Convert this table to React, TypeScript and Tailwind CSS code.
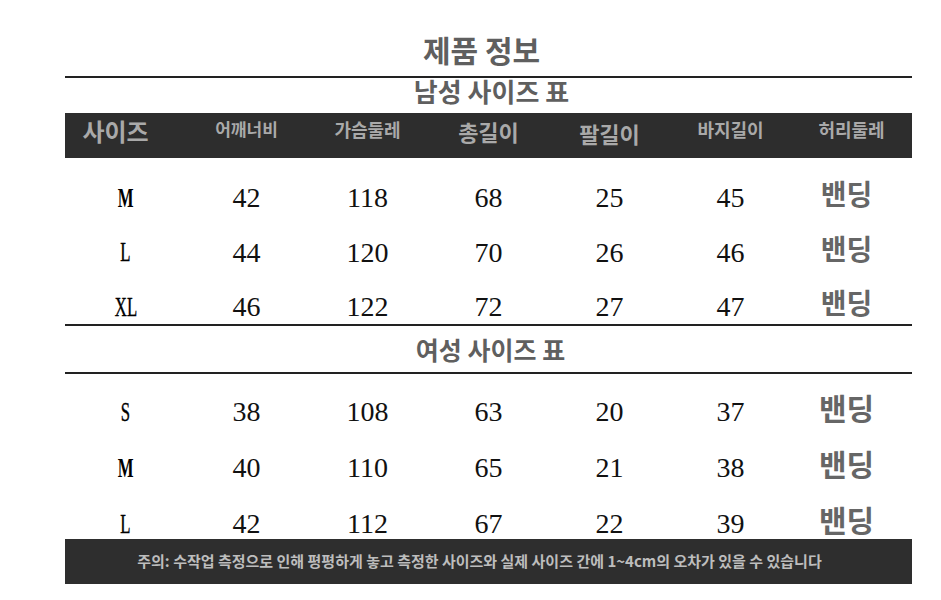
const KR = "font-['Noto_Sans_CJK_KR',sans-serif]";
const SERIF = "font-['Liberation_Serif',serif]";

const men = [
  ["M", "42", "118", "68", "25", "45"],
  ["L", "44", "120", "70", "26", "46"],
  ["XL", "46", "122", "72", "27", "47"],
];

const women = [
  ["S", "38", "108", "63", "20", "37"],
  ["M", "40", "110", "65", "21", "38"],
  ["L", "42", "112", "67", "22", "39"],
];

function SizeLabel({ v }: { v: string }) {
  const bold = v === "M";
  return (
    <span
      className={`inline-block scale-x-[0.62] text-[27px] text-black ${SERIF} ${bold ? "font-bold" : "[-webkit-text-stroke:0.4px_black]"}`}
    >
      {v}
    </span>
  );
}

function Rows({ data, rowH, pt, big }: { data: string[][]; rowH: string; pt: string; big?: boolean }) {
  return (
    <div className={`${pt}`}>
      {data.map((r, i) => (
        <div key={i} className={`grid grid-cols-7 items-center ${rowH}`}>
          <div className="text-center leading-none">
            <SizeLabel v={r[0]} />
          </div>
          {r.slice(1).map((n, j) => (
            <div key={j} className={`text-center text-[28px] leading-none text-[#111] ${SERIF}`}>
              {n}
            </div>
          ))}
          <div
            className={`-translate-x-[5px] -translate-y-[5px] text-center font-bold leading-none text-[#666] ${KR} ${
              big ? "text-[30px]" : "text-[28px]"
            }`}
          >
            밴딩
          </div>
        </div>
      ))}
    </div>
  );
}

export default function App() {
  return (
    <div className="h-[600px] w-[941px] bg-white">
      <div className="ml-[65px] w-[847px]">
        {/* title */}
        <div className={`flex h-[76px] items-end justify-center pb-[12px] pr-[14px] text-[30px] font-bold leading-none text-[#5f5f5f] ${KR}`}>
          제품 정보
        </div>
        <div className="h-[2px] bg-[#222]" />

        {/* men */}
        <div className={`flex h-[35px] items-start justify-center pl-[6px] text-[26px] font-bold leading-none text-[#5f5f5f] ${KR}`}>
          남성 사이즈 표
        </div>
        <div className={`grid h-[45px] grid-cols-7 bg-[#2d2d2d] font-bold text-[#a9a9a9] ${KR}`}>
          <div className="-translate-x-[10px] pt-[6px] text-center text-[24px] leading-none">사이즈</div>
          <div className="pt-[7px] text-center text-[17px] leading-none">어깨너비</div>
          <div className="pt-[7px] text-center text-[18px] leading-none">가슴둘레</div>
          <div className="pt-[7px] text-center text-[22px] leading-none">총길이</div>
          <div className="pt-[9px] text-center text-[22px] leading-none">팔길이</div>
          <div className="pt-[7px] text-center text-[18px] leading-none">바지길이</div>
          <div className="pt-[7px] text-center text-[18px] leading-none">허리둘레</div>
        </div>
        <div className="h-[166px]">
          <Rows data={men} rowH="h-[54.5px]" pt="pt-[13px]" />
        </div>
        <div className="h-[2px] bg-[#222]" />

        {/* women */}
        <div className={`flex h-[46px] items-center justify-center pl-[4px] text-[25px] font-bold leading-none text-[#5f5f5f] ${KR}`}>
          여성 사이즈 표
        </div>
        <div className="h-[2px] bg-[#222]" />
        <div className="h-[165px]">
          <Rows data={women} rowH="h-[56px]" pt="pt-[10px]" big />
        </div>

        {/* footer note */}
        <div className={`flex h-[45px] items-center justify-center bg-[#2e2e2e] pr-[18px] text-[15px] font-bold text-[#bdbdbd] ${KR}`}>
          주의: 수작업 측정으로 인해 평평하게 놓고 측정한 사이즈와 실제 사이즈 간에 1~4cm의 오차가 있을 수 있습니다
        </div>
      </div>
    </div>
  );
}
